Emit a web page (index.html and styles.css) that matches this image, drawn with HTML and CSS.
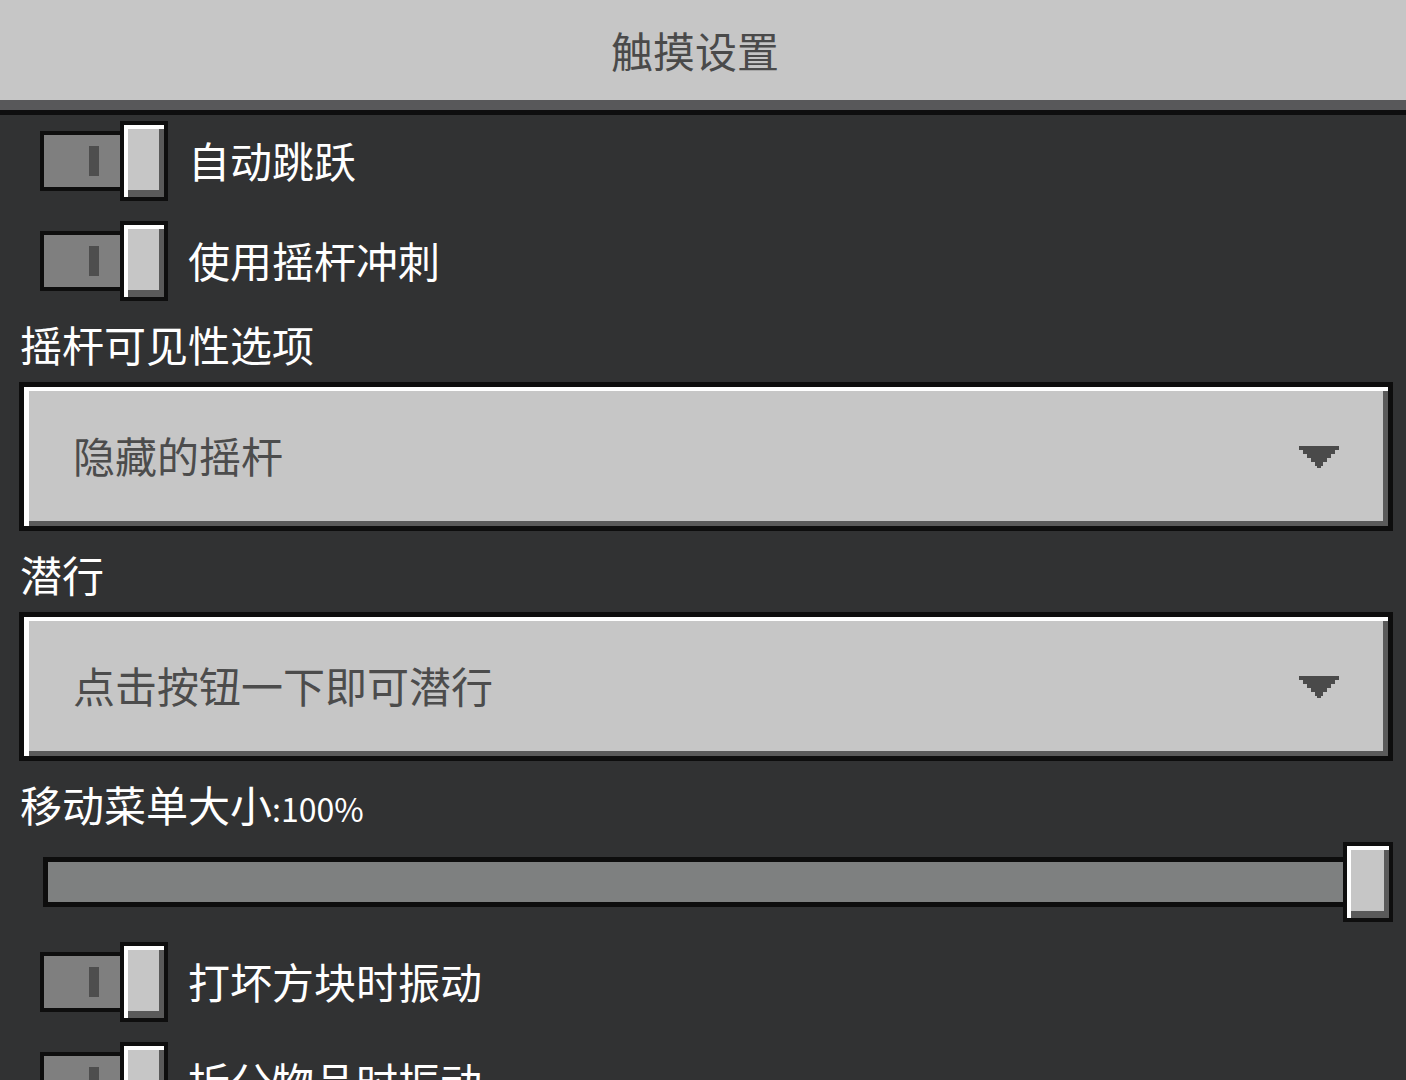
FILE: index.html
```html
<!DOCTYPE html>
<html>
  <head>
    <title>触摸设置</title>
    <link rel="stylesheet" href="styles.css">
  </head>
  <body>
    <header class="header">
      <h1 class="title">触摸设置</h1>
    </header>
    <main class="settings">
      <div class="toggle-row">
        <div class="toggle">
          <div class="toggle-track"><span class="toggle-mark"></span></div>
          <div class="knob toggle-knob"></div>
        </div>
        <span class="toggle-label">自动跳跃</span>
      </div>
      <div class="toggle-row">
        <div class="toggle">
          <div class="toggle-track"><span class="toggle-mark"></span></div>
          <div class="knob toggle-knob"></div>
        </div>
        <span class="toggle-label">使用摇杆冲刺</span>
      </div>

      <div class="field-label">摇杆可见性选项</div>
      <div class="dropdown">
        <span class="dropdown-text">隐藏的摇杆</span>
        <svg class="dropdown-arrow" width="40" height="22" viewBox="0 0 40 22">
          <path d="M0 0H40V4H36V8H32V12H28V16H24V20H22V22H18V20H16V16H12V12H8V8H4V4H0Z" fill="#4a4a4a" shape-rendering="crispEdges"/>
        </svg>
      </div>

      <div class="field-label">潜行</div>
      <div class="dropdown">
        <span class="dropdown-text">点击按钮一下即可潜行</span>
        <svg class="dropdown-arrow" width="40" height="22" viewBox="0 0 40 22">
          <path d="M0 0H40V4H36V8H32V12H28V16H24V20H22V22H18V20H16V16H12V12H8V8H4V4H0Z" fill="#4a4a4a" shape-rendering="crispEdges"/>
        </svg>
      </div>

      <div class="field-label">移动菜单大小<span class="value">:100%</span></div>
      <div class="slider">
        <div class="slider-track"></div>
        <div class="knob slider-knob"></div>
      </div>

      <div class="toggle-row">
        <div class="toggle">
          <div class="toggle-track"><span class="toggle-mark"></span></div>
          <div class="knob toggle-knob"></div>
        </div>
        <span class="toggle-label">打坏方块时振动</span>
      </div>
      <div class="toggle-row">
        <div class="toggle">
          <div class="toggle-track"><span class="toggle-mark"></span></div>
          <div class="knob toggle-knob"></div>
        </div>
        <span class="toggle-label">拆分物品时振动</span>
      </div>
    </main>
  </body>
</html>
```

FILE: styles.css
```css
html {
  background: #313233;
}

body {
  margin: 0;
  height: 1080px;
  overflow: hidden;
  background: #313233;
  color: #fff;
  font-family: "Noto Sans CJK SC", "Noto Sans", sans-serif;
  font-size: 42px;
}

.header {
  height: 100px;
  background: #c6c6c6;
  border-bottom: 10px solid #58585a;
  display: flex;
  align-items: center;
  justify-content: center;
  padding-right: 16px;
}

.title {
  margin: 0;
  font-size: 42px;
  font-weight: 400;
  color: #4a4a4a;
  line-height: 1;
}

.settings {
  border-top: 5px solid #0e0e0f;
  padding-top: 6px;
  display: flex;
  flex-direction: column;
}

/* toggles */

.toggle-row {
  display: flex;
  align-items: center;
  height: 80px;
  margin-bottom: 20px;
  padding-left: 40px;
}

.toggle {
  display: flex;
  align-items: center;
}

.toggle-track {
  width: 84px;
  height: 60px;
  box-sizing: border-box;
  border: 4px solid #0e0e0e;
  background: #7f7f7f;
  display: flex;
  align-items: center;
  justify-content: flex-end;
  padding-right: 21px;
}

.toggle-mark {
  width: 10px;
  height: 30px;
  background: #4e4e4e;
}

.knob {
  box-sizing: border-box;
  border: 4px solid #0e0e0e;
  background: #c6c6c6;
  box-shadow: inset 4px 4px 0 #fff, inset -5px -7px 0 #5a5a5a;
}

.toggle-knob {
  width: 48px;
  height: 80px;
  margin-left: -4px;
}

.toggle-label {
  margin-left: 20px;
  line-height: 1;
  margin-top: -3px;
}

/* labels and dropdowns */

.field-label {
  padding-left: 20px;
  height: 50px;
  line-height: 50px;
  margin-bottom: 11px;
  margin-top: -2px;
}

.value {
  font-size: 32px;
  line-height: 1;
}

.dropdown {
  margin: 2px 13px 20px 19px;
  height: 149px;
  box-sizing: border-box;
  border: 5px solid #0d0d0d;
  background: #c6c6c6;
  box-shadow: inset 5px 4px 0 #fff, inset -5px -5px 0 #5a5a5a;
  display: flex;
  align-items: center;
  justify-content: space-between;
  padding: 0 49px 0 49px;
}

.dropdown-text {
  color: #4c4c4c;
  line-height: 1;
  margin-top: -3px;
}

/* slider */

.slider {
  display: flex;
  align-items: center;
  height: 80px;
  margin: 2px 13px 20px 43px;
}

.slider-track {
  flex: 1;
  height: 50px;
  box-sizing: border-box;
  border: 5px solid #0d0d0d;
  background: #7e8080;
}

.slider-knob {
  width: 50px;
  height: 80px;
  margin-left: -7px;
}
```
